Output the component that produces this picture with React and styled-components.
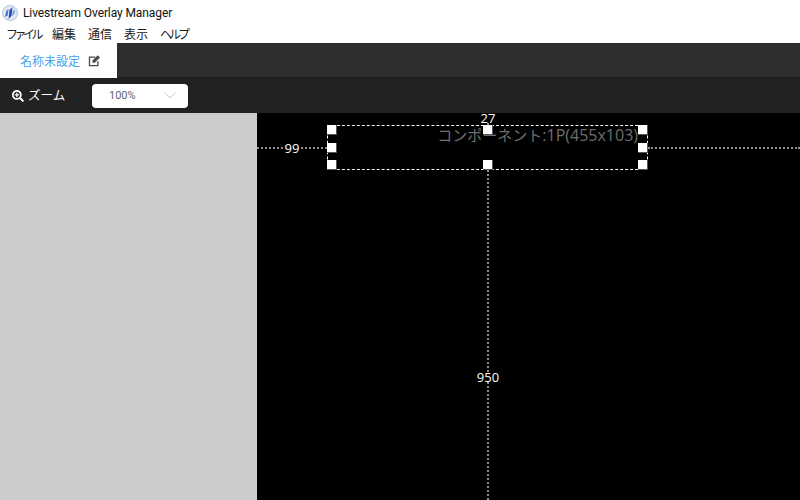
import React from 'react';
import styled, { createGlobalStyle } from 'styled-components';
import { FaSearchPlus } from 'react-icons/fa';

const FONT = 'Roboto, "Noto Sans CJK JP", sans-serif';

const Global = createGlobalStyle`
  html, body { margin: 0; padding: 0; width: 800px; height: 500px; overflow: hidden; background: #fff; }
  body { font-family: ${FONT}; }
`;

const Win = styled.div`
  width: 800px; height: 500px; display: flex; flex-direction: column; overflow: hidden;
`;
const TitleBar = styled.div`
  height: 23px; flex: none; display: flex; align-items: center; gap: 5px; padding: 1px 0 0 2px;
  font-size: 12px; letter-spacing: -0.1px; color: #111; background: #fff;
`;
const MenuBar = styled.div`
  height: 19px; flex: none; display: flex; align-items: center; gap: 12px; padding-left: 6px;
  font-size: 12px; color: #222; background: #fff;
`;
const MenuItem = styled.span`
  letter-spacing: ${p => p.$squeeze || 0}px;
`;
const TabBar = styled.div`
  height: 35px; flex: none; display: flex; background: #2e2e2e; border-bottom: 1px solid #1e1e1e; box-sizing: border-box;
`;
const Tab = styled.div`
  width: 117px; box-sizing: border-box; margin-bottom: -1px; display: flex; align-items: center; gap: 8px; padding-left: 20px;
  background: #fff; color: #3f9fee; font-size: 12px;
`;
const Toolbar = styled.div`
  height: 35px; flex: none; display: flex; align-items: center; background: #222; padding-left: 12px; color: #fff;
`;
const ZoomLabel = styled.div`
  width: 80px; display: flex; align-items: center; gap: 4px; font-size: 12.5px; line-height: 14px; color: #fff;
  svg { font-size: 12px; }
`;
const Select = styled.div`
  width: 96px; height: 24px; box-sizing: border-box; background: #fff; border-radius: 4px; display: flex;
  align-items: center; justify-content: space-between; padding: 0 12px 0 17px; font-size: 11px; color: #5f6470;
`;
const Body = styled.div`
  flex: 1; display: flex; min-height: 0;
`;
const Side = styled.div`
  width: 257px; flex: none; background: #ccc;
`;
const Stage = styled.div`
  flex: 1; position: relative; background: #000;
`;
const GuideH = styled.div`
  position: absolute; top: 34px; left: ${p => p.$left}px; width: ${p => p.$width}px; height: 0;
  border-top: 2px dotted #8f8f8f;
`;
const GuideV = styled.div`
  position: absolute; left: 230px; top: ${p => p.$top}px; height: ${p => p.$height}px; width: 0;
  border-left: 2px dotted #8f8f8f;
`;
const Measure = styled.div`
  position: absolute; left: ${p => p.$x}px; top: ${p => p.$y}px; transform: translate(-50%, -50%);
  font-family: "Open Sans", sans-serif; font-size: 13px; line-height: 10px; color: #fff; background: #000; padding: 0 1px;
`;
const Selection = styled.div`
  position: absolute; left: 70px; top: 12px; width: 321px; height: 45px; box-sizing: border-box;
  border: 1px dashed #fff; overflow: visible;
`;
const Label = styled.div`
  position: absolute; right: 9px; top: -1px; font-size: 15px; line-height: 20px; color: #6e6e6e; white-space: nowrap;
`;
const LabelLatin = styled.span`
  font-family: "Open Sans", sans-serif; font-size: 16px;
`;
const Handle = styled.div`
  position: absolute; left: ${p => p.$x}px; top: ${p => p.$y}px; width: 10px; height: 10px; box-sizing: border-box;
  background: #fff; border-right: 1px solid #555; border-bottom: 1px solid #555;
`;

const Logo = () => (
  <svg width="16" height="16" viewBox="0 0 16 16">
    <circle cx="8" cy="8" r="7.5" fill="#e4e9f6" stroke="#b4c0dc" />
    <path d="M3 12 L4.2 6 L6.5 4 L5.8 10.5 Z" fill="#4a7bd6" />
    <path d="M6.5 14 L7.5 5 L10.5 2 L9.5 11 Z" fill="#1f52b4" />
    <path d="M10 11 L11 6 L13 4.5 L12.3 9 Z" fill="#6f94dc" />
  </svg>
);

const EditIcon = () => (
  <svg width="13" height="13" viewBox="0 0 16 16" fill="#4a4a4a">
    <path d="M1 3h8v1.6H2.6v8.8h8.8V9H13v6H1z" />
    <path d="M5.5 8 L12 1.5 L14.8 4.3 L8.3 10.8 L5.5 10.8 Z" />
  </svg>
);

const Chevron = () => (
  <svg width="12" height="7" viewBox="0 0 12 7" fill="none" stroke="#c4c4c4" strokeWidth="1">
    <path d="M0.5 0.5 L6 6 L11.5 0.5" />
  </svg>
);

const handles = [
  [-1, -1], [155, -1], [310, -1],
  [-1, 17], [310, 17],
  [-1, 34], [155, 34], [310, 34],
];

export default function App() {
  return (
    <Win>
      <Global />
      <TitleBar><Logo />Livestream Overlay Manager</TitleBar>
      <MenuBar>
        <MenuItem $squeeze={-3.5}>ファイル</MenuItem>
        <MenuItem>編集</MenuItem>
        <MenuItem>通信</MenuItem>
        <MenuItem>表示</MenuItem>
        <MenuItem $squeeze={-3}>ヘルプ</MenuItem>
      </MenuBar>
      <TabBar>
        <Tab>名称未設定<EditIcon /></Tab>
      </TabBar>
      <Toolbar>
        <ZoomLabel><FaSearchPlus />ズーム</ZoomLabel>
        <Select>100%<Chevron /></Select>
      </Toolbar>
      <Body>
        <Side />
        <Stage>
          <GuideH $left={0} $width={70} />
          <GuideH $left={391} $width={152} />
          <GuideV $top={0} $height={12} />
          <GuideV $top={57} $height={330} />
          <Selection>
            <Label>コンポーネント<LabelLatin>:1P(455x103)</LabelLatin></Label>
            {handles.map(([x, y]) => <Handle key={`${x}-${y}`} $x={x} $y={y} />)}
          </Selection>
          <Measure $x={231} $y={5}>27</Measure>
          <Measure $x={35} $y={35}>99</Measure>
          <Measure $x={231} $y={264}>950</Measure>
        </Stage>
      </Body>
    </Win>
  );
}
